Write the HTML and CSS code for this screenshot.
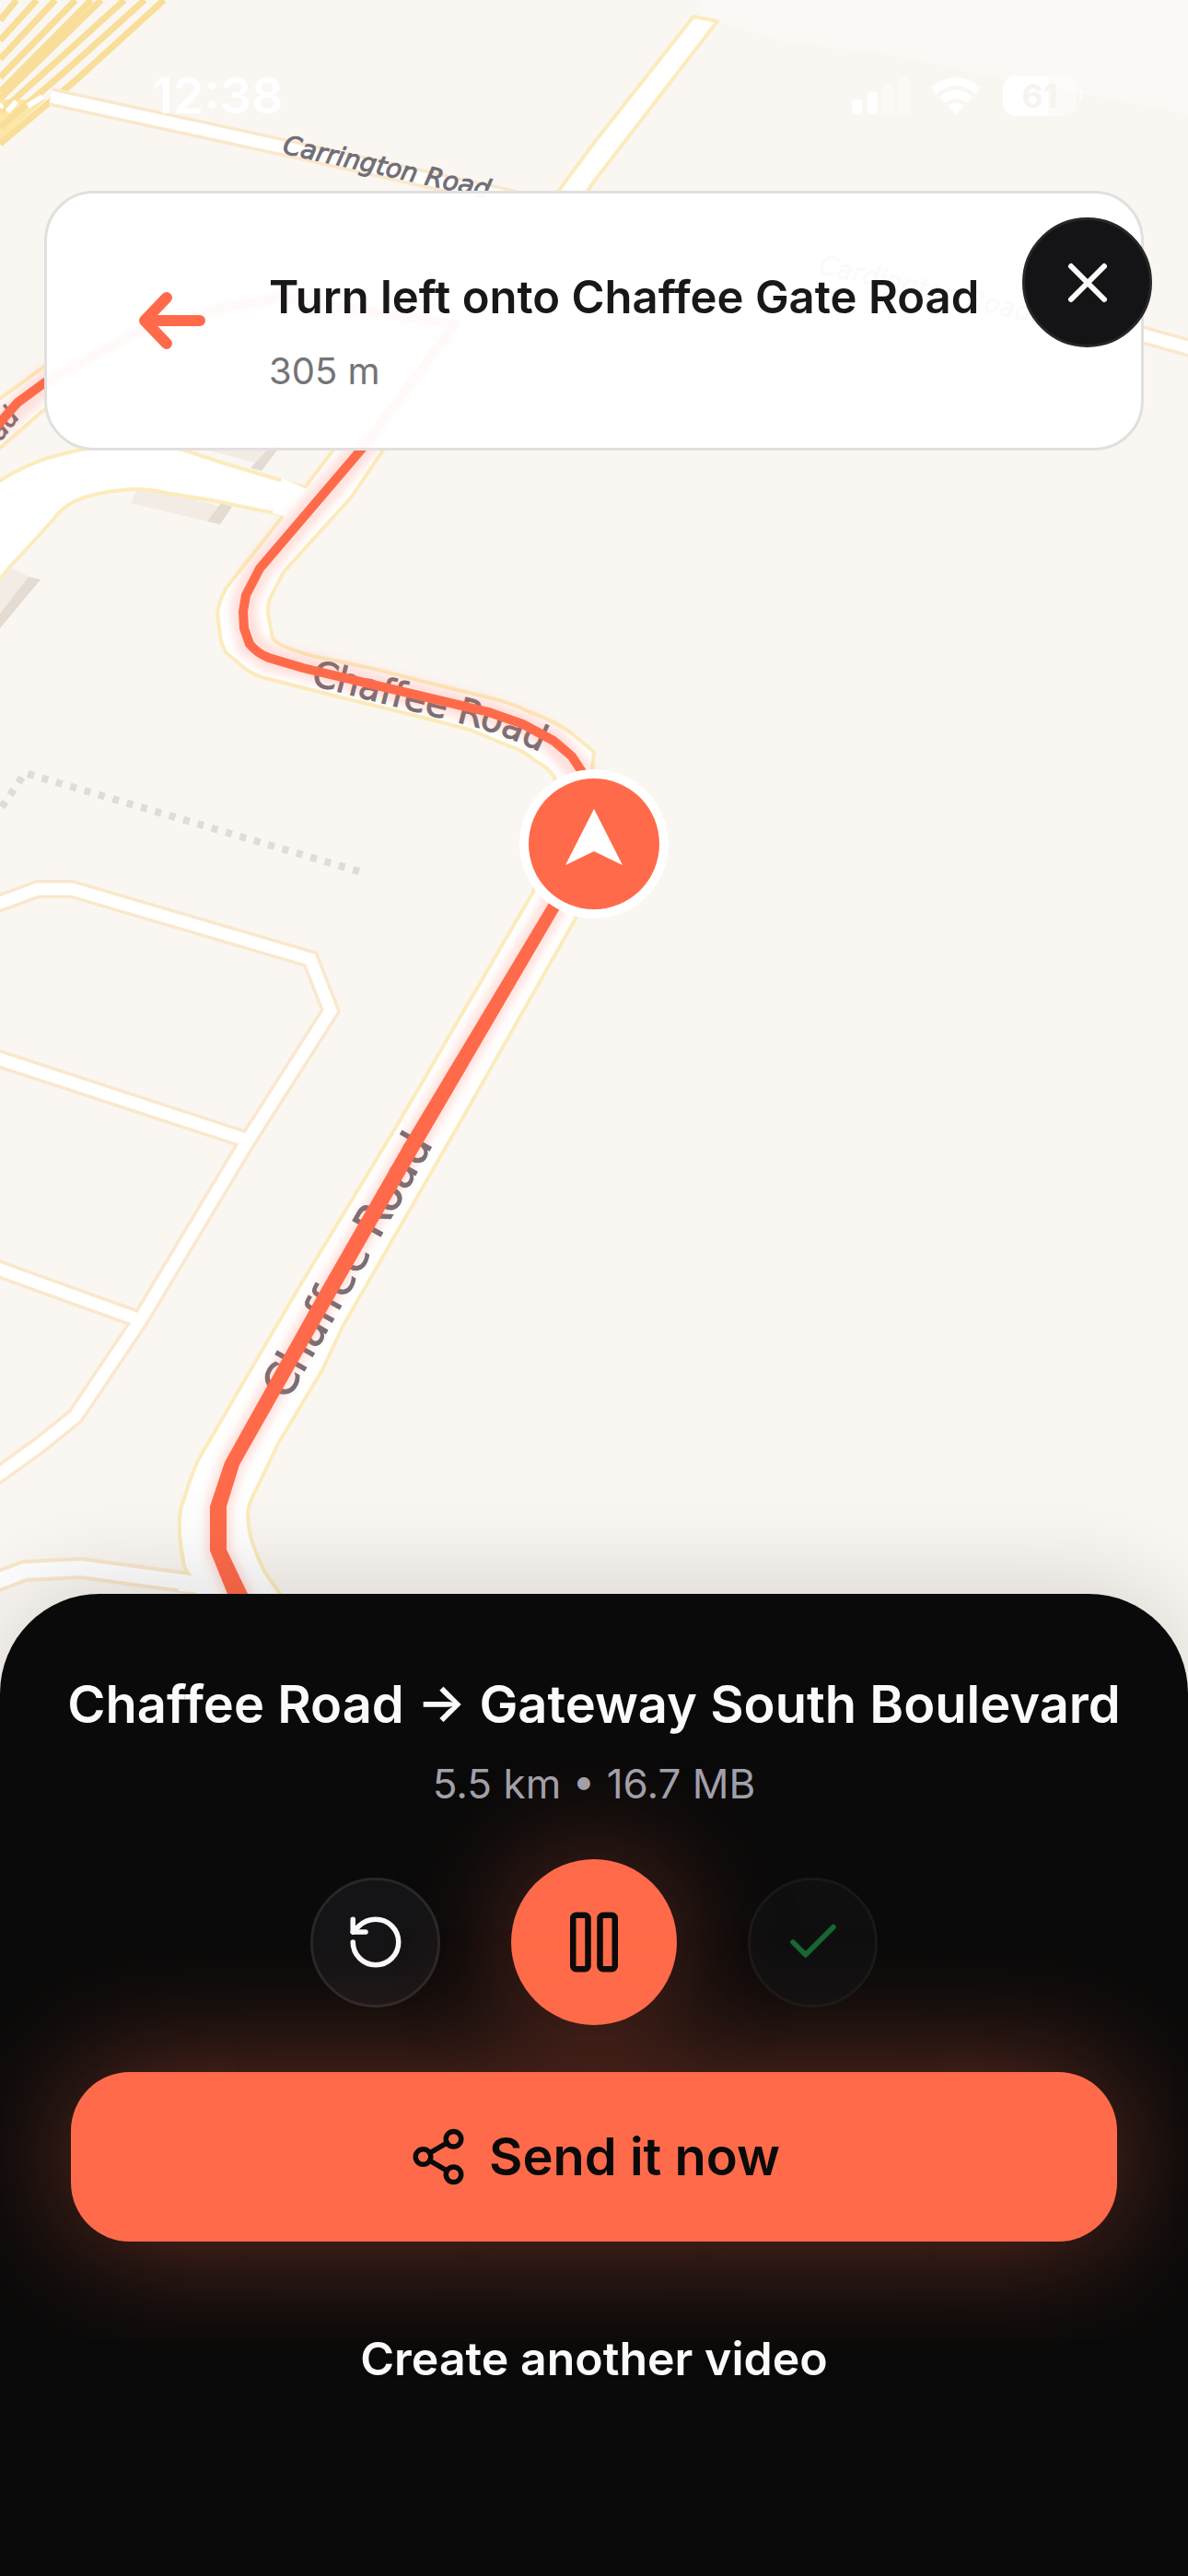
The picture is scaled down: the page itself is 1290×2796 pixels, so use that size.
FILE: index.html
```html
<!DOCTYPE html>
<html lang="en">
<head>
    <meta charset="UTF-8">
    <meta name="viewport" content="width=device-width, initial-scale=1">
    <title>Chaffee Road → Gateway South Boulevard</title>
    <link rel="stylesheet" href="styles.css">
</head>
<body>

<div class="screen">
    <svg class="map" viewBox="0 0 1290 1840" preserveAspectRatio="xMidYMin slice" aria-hidden="true">
        <defs>
            <path id="carrington" d="M306 166 L560 222"/>
            <path id="carrington2" d="M888 296 L1200 368"/>
            <path id="chaffeeTop" d="M337 743 L512 788 Q560 800 620 834"/>
            <path id="chaffeeSide" d="M312 1521 L490 1207"/>
            <filter id="soft" x="-20%" y="-20%" width="140%" height="140%">
                <feGaussianBlur stdDeviation="5"/>
            </filter>
        </defs>

        <path class="land" d="M760 18 L850 45 L970 60 L1070 82 L1290 124 V0 H760 Z"/>

        <!-- railway lines -->
        <path class="rail-bed" d="M0 108 L50 108 L0 152 Z"/>
        <path class="rail" d="M18 0 L0 22 M40 0 L0 44 M60 0 L0 64 M82 0 L0 84 M99 0 L0 100 M110 0 L0 107 M135 0 L60 68 L0 122 M157 0 L70 78 L0 138 M178 0 L80 89 L0 156"/>

        <!-- buildings -->
        <path class="building" d="M195 470 L302 470 L284 504 L216 486 Z M152 525 L240 550 L225 566 L142 546 Z M10 615 L31 626 L0 666 V610 Z"/>
        <path class="building-side" d="M296 482 L306 482 L284 511 L272 508 Z M240 546 L252 550 L239 569 L225 566 Z M31 626 L44 629 L0 682 V666 Z"/>

        <!-- small streets -->
        <g class="street-edge">
            <path d="M-5 982 L41 965 L78 965 L337 1041 L359 1097 L269 1238 L152 1433 L82 1537 L41 1570 L-5 1603"/>
            <path d="M-5 1148 L267 1237"/>
            <path d="M-5 1376 L150 1432"/>
            <path class="wide" d="M-5 1717 L27 1705 L88 1702 L220 1720"/>
            <path d="M55 105 L308 160 L560 216"/>
            <path d="M1200 352 L1300 380"/>
        </g>
        <path class="road" d="M753 18 L645 155 L600 216 L632 216 L645 197 L779 23 Z"/>
        <g class="street">
            <path d="M-5 982 L41 965 L78 965 L337 1041 L359 1097 L269 1238 L152 1433 L82 1537 L41 1570 L-5 1603"/>
            <path d="M-5 1148 L267 1237"/>
            <path d="M-5 1376 L150 1432"/>
            <path class="wide" d="M-5 1717 L27 1705 L88 1702 L220 1720"/>
            <path d="M55 105 L308 160 L560 216"/>
            <path d="M1200 352 L1300 380"/>
        </g>
        <path class="street-dash" d="M8 121 L18 110 M30 115 L46 105 M0 116 L3 114"/>

        <!-- Chaffee Road -->
        <path class="road" d="M-10 528 Q20 508 49 498 Q75 490 95 487 L195 487 L247 504 L331 529 L300 570 L308 559 L230 543 L181 535 Q155 529 132 532 Q105 534 81 544 Q66 552 58 564 L10 616 L-10 640 Z"/>
        <path class="road" d="M-10 440 L49 397 L140 345 L240 312 L350 300 L530 340 L417 487 L382 539 L308 621 L295 646 Q290 655 291 666 L296 693 Q300 698 310 702 Q328 710 350 714 L411 727 L473 743 L531 757 Q556 763 576 773 Q598 781 617 793 L645 816 L625 997 L506 1207 L372 1440 L350 1487 L302 1567 L280 1613 Q270 1630 269 1643 Q270 1665 275 1677 Q280 1692 288 1707 L304 1730 L350 1800 H230 L206 1710 Q198 1700 199 1693 Q194 1670 195 1647 Q196 1635 199 1630 Q205 1608 214 1587 L247 1530 L323 1400 L432 1220 L579 968 L603 845 Q596 833 580 825 Q568 814 551 809 L510 792 L444 775 L370 757 L284 735 Q270 730 263 723 L246 709 Q240 700 239 689 L236 666 Q237 655 245 639 L267 611 L308 559 L331 529 L460 360 L350 335 L240 350 L140 385 L45 447 L-10 495 Z"/>
        <path class="junction" d="M306 519 L336 532 L313 562 L296 557 Z"/>
        <path class="junction" d="M194 1709 L214 1711 L222 1729 L194 1727 Z"/>

        <path class="footpath" d="M2 876 L27 839 L397 948"/>

        <g class="labels">
            <text class="small"><textPath href="#carrington">Carrington Road</textPath></text>
            <text class="small"><textPath href="#carrington2">Cardington Road</textPath></text>
            <text><textPath href="#chaffeeTop">Chaffee Road</textPath></text>
            <text class="near"><textPath href="#chaffeeSide">Chaffee Road</textPath></text>
            <text class="small" text-anchor="end" transform="translate(22 452) rotate(-52)">Road</text>
        </g>

        <!-- route -->
        <path class="glow" filter="url(#soft)" d="M-10 470 L49 415 L144 363 L247 333 L304 323 L494 360 L393 487 L282 617 L267 646 L264 664 L271 699 L292 714 L531 773 L568 786 L601 804 L640 850 L600 985 L448 1243 L337 1437 L252 1588 L237 1635 V1683 L258 1730 L300 1800"/>
        <path class="route far" d="M-10 470 L19 437 L49 415 L144 363 L247 333 L304 323 L494 352 L393 487 L282 617 L267 646 L264 664 L265 682 L271 699 Q279 709 292 714 L329 725 L531 773 L568 786 L601 804 L621 821 L640 850"/>
        <path class="route near" d="M596 980 L608 986 L456 1246 L366 1403 L260 1590 L246 1635 V1682 L269 1730 L310 1800 H280 L247 1730 L228 1683 V1635 L244 1587 L350 1397 L440 1240 Z"/>

        <circle class="pin-ring" cx="645" cy="916" r="81"/>
        <circle class="pin" cx="645" cy="916" r="71"/>
        <path class="pin-arrow" d="M645 878 L676 939 L645 924 L614 939 Z"/>
    </svg>

    <div class="statusbar">
        <span class="time">12:38</span>
        <div class="indicators">
            <svg class="signal" viewBox="0 0 62 42" aria-hidden="true">
                <rect x="0" y="25" width="11" height="16" rx="3"/>
                <rect x="17" y="17" width="11" height="24" rx="3"/>
                <rect class="off" x="34" y="9" width="11" height="32" rx="3"/>
                <rect class="off" x="51" y="1" width="11" height="40" rx="3"/>
            </svg>
            <svg class="wifi" viewBox="0 0 54 42" aria-hidden="true">
                <path d="M0 12 Q27 -10 54 12 L48 19 Q27 1 6 19 Z"/>
                <path d="M9 22 Q27 7 45 22 L39 29 Q27 19 15 29 Z"/>
                <path d="M18 32 Q27 25 36 32 L27 41 Z"/>
            </svg>
            <div class="battery"><span>61</span></div>
        </div>
    </div>

    <div class="turn">
        <svg class="turn-icon" viewBox="0 0 72 72" aria-hidden="true">
            <path d="M66 36 H6 M30 11 L6 36 L30 61"/>
        </svg>
        <div class="turn-text">
            <h2>Turn left onto Chaffee Gate Road</h2>
            <p>305 m</p>
        </div>
    </div>
    <button class="round close" type="button" aria-label="Close">
        <svg class="icon large" viewBox="0 0 24 24"><path d="M18 6 6 18M6 6l12 12"/></svg>
    </button>

    <div class="sheet">
        <h1>Chaffee Road → Gateway South Boulevard</h1>
        <p class="meta">5.5 km • 16.7 MB</p>
        <div class="controls">
            <button class="round" type="button" aria-label="Restart">
                <svg class="icon" viewBox="0 0 24 24"><path d="M3 12a9 9 0 1 0 9-9 9.75 9.75 0 0 0-6.74 2.74L3 8"/><path d="M3 3v5h5"/></svg>
            </button>
            <button class="round pause" type="button" aria-label="Pause">
                <svg class="icon" viewBox="0 0 24 24"><rect x="5" y="3" width="5" height="18" rx="1"/><rect x="14" y="3" width="5" height="18" rx="1"/></svg>
            </button>
            <button class="round done" type="button" aria-label="Done" disabled>
                <svg class="icon" viewBox="0 0 24 24"><path d="M20 6 9 17l-5-5"/></svg>
            </button>
        </div>
        <button class="send" type="button">
            <svg class="icon" viewBox="0 0 24 24" aria-hidden="true"><circle cx="18" cy="5" r="3"/><circle cx="6" cy="12" r="3"/><circle cx="18" cy="19" r="3"/><path d="M8.59 13.51l6.83 3.98M15.41 6.51l-6.82 3.98"/></svg>
            Send it now
        </button>
        <button class="another" type="button">Create another video</button>
    </div>
</div>

</body>
</html>
```

FILE: styles.css
```css
* {
    box-sizing: border-box;
}
body {
    margin: 0;
    background-color: #faf6f2;
    font-family: Inter, "Liberation Sans", sans-serif;
}
h1, h2, p {
    margin: 0;
}
button {
    padding: 0;
    border: none;
    font-family: inherit;
    cursor: pointer;
}
.screen {
    position: relative;
    display: flex;
    flex-direction: column;
    min-height: 100vh;
    overflow: hidden;
}

/* map */
.map {
    position: absolute;
    top: 0;
    left: 0;
    width: 100%;
    background-color: #faf6f2;
}
.land {
    fill: #faf9f5;
}
.rail {
    fill: none;
    stroke: #f8de98;
    stroke-width: 7;
}
.rail-bed {
    fill: #fce7a6;
}
.building {
    fill: #f3ece4;
}
.building-side {
    fill: #e4dbd2;
}
.road {
    fill: #fff;
    stroke: #fcebbc;
    stroke-width: 4;
    stroke-linejoin: round;
}
.junction {
    fill: #fff;
}
.street-edge {
    fill: none;
    stroke: #fae8cd;
    stroke-width: 20;
}
.street {
    fill: none;
    stroke: #fff;
    stroke-width: 13;
}
.street-edge .wide {
    stroke-width: 24;
}
.street .wide {
    stroke-width: 16;
}
.street-dash {
    stroke: #fff;
    stroke-width: 6;
}
.footpath {
    fill: none;
    stroke: #e0dcd9;
    stroke-width: 8;
    stroke-dasharray: 7 9;
}
.labels {
    font-family: "DejaVu Sans", sans-serif;
    font-size: 39px;
    fill: #726e76;
    stroke: #726e76;
    stroke-width: 1px;
}
.labels .small {
    font-size: 28px;
    font-style: oblique;
}
.labels .near {
    font-size: 48px;
}
.glow {
    fill: none;
    stroke: #ff6b4a;
    stroke-opacity: 0.2;
    stroke-width: 28;
}
.route.far {
    fill: none;
    stroke: #ff6b4a;
    stroke-width: 10;
}
.route.near {
    fill: #ff6b4a;
}
.pin-ring, .pin-arrow {
    fill: #fff;
}
.pin {
    fill: #ff6b4a;
}

/* status bar */
.statusbar {
    position: relative;
    display: flex;
    justify-content: space-between;
    align-items: center;
    height: 207px;
    padding: 0 121px 0 165px;
    color: #fff;
}
.time {
    font-size: 54px;
    font-weight: 600;
}
.indicators {
    display: flex;
    align-items: center;
    gap: 24px;
}
.signal {
    width: 62px;
    fill: #fff;
}
.signal .off {
    opacity: 0.4;
}
.wifi {
    width: 54px;
    fill: #fff;
}
.battery {
    position: relative;
    width: 80px;
    height: 44px;
    border-radius: 14px;
    background: linear-gradient(to right, #fff 61%, rgba(255, 255, 255, 0.5) 61%);
    color: #f7f3ef;
    font-size: 36px;
    font-weight: 700;
    line-height: 44px;
    text-align: center;
}
.battery::after {
    content: "";
    position: absolute;
    right: -7px;
    top: 15px;
    width: 4px;
    height: 14px;
    border-radius: 0 4px 4px 0;
    background-color: rgba(255, 255, 255, 0.5);
}

/* next turn */
.turn {
    position: relative;
    display: flex;
    align-items: center;
    gap: 69px;
    min-height: 282px;
    margin: 0 48px;
    padding: 0 100px;
    border: 3px solid #e2e0df;
    border-radius: 54px;
    background-color: rgba(255, 255, 255, 0.97);
}
.turn-icon {
    flex: none;
    width: 72px;
    fill: none;
    stroke: #ff6b4a;
    stroke-width: 12;
    stroke-linecap: round;
    stroke-linejoin: round;
}
.turn-text {
    padding-top: 24px;
}
.turn-text h2 {
    color: #18181a;
    font-size: 49px;
    font-weight: 600;
    line-height: 60px;
    white-space: nowrap;
}
.turn-text p {
    margin-top: 26px;
    color: #747476;
    font-size: 40px;
    line-height: 48px;
}

/* buttons */
.round {
    display: flex;
    justify-content: center;
    align-items: center;
    width: 141px;
    height: 141px;
    border: 3px solid #27272a;
    border-radius: 50%;
    background-color: #141416;
    color: #fafafa;
}
.icon {
    width: 66px;
    height: 66px;
    fill: none;
    stroke: currentColor;
    stroke-width: 2;
    stroke-linecap: round;
    stroke-linejoin: round;
}
.icon.large {
    width: 72px;
    height: 72px;
}
.close {
    position: absolute;
    top: 236px;
    right: 39px;
}

/* bottom sheet */
.sheet {
    position: relative;
    display: flex;
    flex-direction: column;
    align-items: center;
    margin-top: auto;
    padding: 84px 77px 191px;
    border-radius: 108px 108px 0 0;
    background-color: #0a0a0a;
    box-shadow: 0 -12px 110px rgba(0, 0, 0, 0.14);
}
.sheet h1 {
    color: #fafafa;
    font-size: 56px;
    font-weight: 600;
    line-height: 72px;
    white-space: nowrap;
}
.meta {
    margin-top: 20px;
    color: #a1a1aa;
    font-size: 44px;
    line-height: 60px;
}
.controls {
    display: flex;
    align-items: center;
    gap: 77px;
    margin-top: 52px;
}
.pause {
    width: 180px;
    height: 180px;
    border: none;
    background-color: #ff6b4a;
    box-shadow: 0 0 130px rgba(255, 107, 74, 0.35);
    color: #0a0a0a;
}
.pause .icon {
    width: 78px;
    height: 78px;
}
.done {
    opacity: 0.5;
    color: #22c55e;
}
.send {
    display: flex;
    justify-content: center;
    align-items: center;
    gap: 22px;
    width: 100%;
    height: 184px;
    margin-top: 51px;
    border-radius: 64px;
    background-color: #ff6b4a;
    box-shadow: 0 0 140px rgba(255, 107, 74, 0.4);
    color: #0a0a0a;
    font-size: 56px;
    font-weight: 600;
}
.another {
    margin-top: 82px;
    background: none;
    color: #fafafa;
    font-size: 50px;
    font-weight: 600;
    line-height: 90px;
}
```
